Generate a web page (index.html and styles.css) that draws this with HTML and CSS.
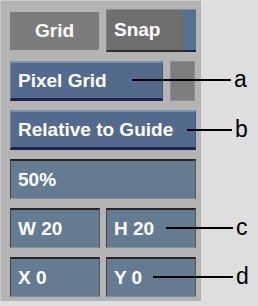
FILE: index.html
```html
<!DOCTYPE html>
<html lang="en">
<head>
    <meta charset="UTF-8">
    <title>Grid Settings</title>
    <link rel="stylesheet" href="styles.css">
</head>
<body>
    <div class="stage">
        <div class="panel">
            <div class="row top-row">
                <div class="tab">Grid</div>
                <div class="snap">
                    <div class="snap-btn">Snap</div>
                    <div class="snap-led"></div>
                </div>
            </div>
            <div class="row">
                <div class="btn btn-grow">Pixel Grid</div>
                <div class="swatch"></div>
            </div>
            <div class="row">
                <div class="btn btn-grow">Relative to Guide</div>
            </div>
            <div class="row">
                <div class="field field-grow">50%</div>
            </div>
            <div class="row pair">
                <div class="field">W 20</div>
                <div class="field">H 20</div>
            </div>
            <div class="row pair">
                <div class="field">X 0</div>
                <div class="field">Y 0</div>
            </div>
        </div>

        <div class="callout callout-a"><span class="leader"></span><span class="tag">a</span></div>
        <div class="callout callout-b"><span class="leader"></span><span class="tag">b</span></div>
        <div class="callout callout-c"><span class="leader"></span><span class="tag">c</span></div>
        <div class="callout callout-d"><span class="leader"></span><span class="tag">d</span></div>
    </div>
</body>
</html>
```

FILE: styles.css
```css
* {
    margin: 0;
    padding: 0;
    box-sizing: border-box;
}
body {
    background-color: #dedede;
    font-family: "Liberation Sans", Arial, sans-serif;
}
.stage {
    position: relative;
    width: 258px;
    height: 306px;
}
.panel {
    width: 201px;
    height: 301px;
    background-color: #b4b4b4;
    border-left: 1px solid #cbcbcb;
    border-top: 1px solid #cbcbcb;
    padding: 8px 5px 0 9px;
    display: flex;
    flex-direction: column;
    gap: 9px;
}
.row {
    display: flex;
    height: 40px;
    gap: 7px;
}
.top-row {
    height: 43px;
    align-items: center;
}
.pair {
    gap: 6px;
}
.pair .field {
    width: 90px;
}

/* labels */
.tab, .btn, .snap-btn, .field {
    color: #fff;
    font-size: 19px;
    font-weight: bold;
    display: flex;
    align-items: center;
    white-space: nowrap;
}
.tab {
    width: 89px;
    height: 38px;
    justify-content: center;
    background-color: #7c7c7c;
}
.snap {
    display: flex;
    height: 43px;
    width: 90px;
}
.snap-btn {
    flex: 1;
    padding-left: 7px;
    background-color: #6f6f6f;
    border-top: 1px solid #8a8a8a;
    border-left: 1px solid #858585;
    border-bottom: 2px solid #2e2e2e;
}
.snap-led {
    width: 13px;
    background-color: #57708f;
    border-top: 1px solid #7890ad;
    border-bottom: 2px solid #1e2350;
}

/* raised blue buttons */
.btn {
    padding-left: 7px;
    background-color: #546a8d;
    border-top: 2px solid #7890b2;
    border-left: 1px solid #6e86a8;
    border-right: 1px solid #40567a;
    border-bottom: 3px solid #1e2350;
}
.btn-grow {
    flex: 1;
}
.swatch {
    width: 25px;
    height: 40px;
    margin-right: 1px;
    background-color: #7d7d7d;
    border: 1px solid #8e8e8e;
}

/* inset fields */
.field {
    padding-left: 7px;
    background-color: #657b92;
    border-top: 2px solid #262626;
    border-left: 1px solid #444;
    border-right: 1px solid #555;
    border-bottom: 1px solid #7f8f9f;
}
.field-grow {
    flex: 1;
}

/* callouts */
.callout {
    position: absolute;
    display: flex;
    align-items: center;
    height: 23px;
}
.leader {
    display: block;
    height: 2px;
    background-color: #000;
}
.tag {
    margin-left: 3px;
    font-size: 23px;
    line-height: 23px;
    color: #000;
}
.callout-a { left: 132px; top: 68px; }
.callout-a .leader { width: 99px; }
.callout-b { left: 187px; top: 118px; }
.callout-b .leader { width: 45px; }
.callout-c { left: 166px; top: 216px; }
.callout-c .leader { width: 67px; }
.callout-d { left: 153px; top: 265px; }
.callout-d .leader { width: 80px; }
```
